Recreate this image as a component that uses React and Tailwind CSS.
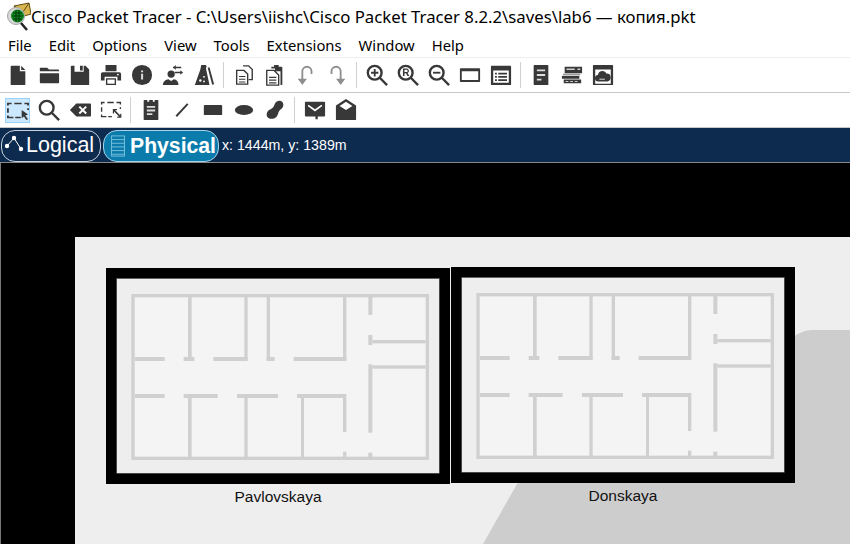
const Svg = ({ children, className = 'text-[#383838]' }) => (
  <svg viewBox="0 0 24 24" width="22" height="22" fill="currentColor" className={className}>
    {children}
  </svg>
);

const NewIcon = () => (
  <Svg>
    <path d="M5 2h9v6h6v14a1 1 0 0 1-1 1H5a1 1 0 0 1-1-1V3a1 1 0 0 1 1-1zM15.500 2l4.500 4.500h-4.500z" />
  </Svg>
);
const OpenIcon = () => (
  <Svg>
    <path d="M2 4h8l2 2h10a1 1 0 0 1 1 1v1H2zM2 10h21v10a1 1 0 0 1-1 1H3a1 1 0 0 1-1-1z" />
  </Svg>
);
const SaveIcon = () => (
  <Svg>
    <path d="M3 2h3v6.500h10V2h2l4 4v16a1 1 0 0 1-1 1H3a1 1 0 0 1-1-1V3a1 1 0 0 1 1-1zM12 2h3v5h-3z" />
  </Svg>
);
const PrintIcon = () => (
  <Svg>
    <path d="M6 1h12v7H6zM3 9h18a2 2 0 0 1 2 2v7h-4v-4H5v4H1v-7a2 2 0 0 1 2-2zM6.500 15.500h11V23h-11z" />
    <circle cx="19.500" cy="11.500" r="1" fill="#fff" />
    <path d="M8 17h8v4.500H8z" fill="#fff" />
  </Svg>
);
const InfoIcon = () => (
  <Svg>
    <circle cx="12" cy="12" r="11" />
    <path d="M11 10.500h2.200V17H11zM11 7h2.200v2H11z" fill="#ddd" />
  </Svg>
);
const UserIcon = () => (
  <Svg>
    <circle cx="10" cy="11" r="4" />
    <path d="M1 23c0-4 3-6 6-6.500l3 2 3-2c3 .5 5 2.500 5 6.500z" />
    <path d="M12 3h9v1.500h-9zM12 3.700l3-2.500v5zM14 10h8V8.500h-8zM23 9.200l-3-2.500v5z" />
  </Svg>
);
const LabIcon = () => (
  <Svg>
    <path d="M9 1h5l1 2-1 1 4 19H2l6-17z" />
    <path d="M16 4l2-.5L23 22l-2 .5z" />
    <circle cx="8" cy="18" r="1.300" fill="#fff" />
    <circle cx="12" cy="14" r="1" fill="#fff" />
    <circle cx="12" cy="19" r="1" fill="#fff" />
  </Svg>
);
const CopyIcon = () => (
  <Svg>
    <path d="M11 2h6l4 4v11h-4" fill="#fff" stroke="currentColor" strokeWidth="1.500" />
    <path d="M4 7h8l4 4v11H4z" fill="#fff" stroke="currentColor" strokeWidth="1.500" />
    <path d="M6.500 13h7v1.300h-7zM6.500 16h7v1.300h-7zM6.500 19h7v1.300h-7z" />
  </Svg>
);
const PasteIcon = () => (
  <Svg>
    <path d="M8 3h3V1h5v2h3a1 1 0 0 1 1 1v18a1 1 0 0 1-1 1h-1V8h-6V5H8z" />
    <path d="M3 7h8l5 5v11H3z" fill="#fff" stroke="currentColor" strokeWidth="1.500" />
    <path d="M5.500 14h8v1.300h-8zM5.500 17h8v1.300h-8zM5.500 20h8v1.300h-8z" />
  </Svg>
);
const UndoIcon = () => (
  <Svg className="text-[#8e8e8e]">
    <path d="M8 23l-5-7h4V8a6 6 0 0 1 12 0v3h-2V8a4 4 0 0 0-8 0v8h4z" />
  </Svg>
);
const RedoIcon = () => (
  <Svg className="text-[#8e8e8e]">
    <path d="M16 23l5-7h-4V8a6 6 0 0 0-12 0v3h2V8a4 4 0 0 1 8 0v8h-4z" />
  </Svg>
);
const Lens = ({ children }) => (
  <Svg>
    <circle cx="9.500" cy="9.500" r="7.500" fill="none" stroke="currentColor" strokeWidth="2.600" />
    <path d="M15 15l8 8" stroke="currentColor" strokeWidth="2.600" />
    {children}
  </Svg>
);
const WindowIcon = () => (
  <Svg>
    <path d="M2 4.500h20a1 1 0 0 1 1 1v13a1 1 0 0 1-1 1H2a1 1 0 0 1-1-1v-13a1 1 0 0 1 1-1zM3 8v9.500h18V8z" fillRule="evenodd" />
  </Svg>
);
const ListIcon = () => (
  <Svg>
    <path d="M2 2h20a1 1 0 0 1 1 1v19a1 1 0 0 1-1 1H2a1 1 0 0 1-1-1V3a1 1 0 0 1 1-1zM3.500 7v13.500h17V7z" fillRule="evenodd" />
    <path d="M5.500 9.500h2v2h-2zM9 9.500h9.500v2H9zM5.500 13h2v2h-2zM9 13h9.500v2H9zM5.500 16.500h2v2h-2zM9 16.500h9.500v2H9z" />
  </Svg>
);
const DocIcon = () => (
  <Svg>
    <path d="M5 1h14a1 1 0 0 1 1 1v20a1 1 0 0 1-1 1H5a1 1 0 0 1-1-1V2a1 1 0 0 1 1-1z" />
    <path d="M7.500 6h9v2h-9zM7.500 11h9v2h-9zM7.500 16h5v2h-5z" fill="#ddd" />
  </Svg>
);
const SwitchIcon = () => (
  <Svg>
    <path d="M4 3h19v7H4zM1 13h19v3H1zM3 17h19v4H3z" />
    <path d="M6 5h9v1.500H6zM18 5h3v1.500h-3zM5 18.500h3v1H5zM10 18.500h3v1h-3zM15 18.500h3v1h-3z" fill="#ccc" />
    <path d="M2 10.500h19v2H2z" fill="#9a9a9a" />
  </Svg>
);
const CloudIcon = () => (
  <Svg>
    <path d="M2 1h20a1 1 0 0 1 1 1v20a1 1 0 0 1-1 1H2a1 1 0 0 1-1-1V2a1 1 0 0 1 1-1zM3.500 6v15.500h17V6z" fillRule="evenodd" />
    <path d="M7 19a3.500 3.500 0 0 1-.5-7A5 5 0 0 1 16 10.500a4.300 4.300 0 0 1 1 8.500z" />
    <path d="M8 16h6v1.200H8z" fill="#ccc" />
  </Svg>
);
const SelectIcon = () => (
  <Svg>
    <path d="M0 4h5v1.600H2v1.500H0zM8 4h8v1.600H8zM19 4h5v3h-2V5.600h-3zM0 10h2v5H0zM22 10h2v2h-2zM0 18h2v1.400h5V21H0zM9 19.400h6V21H9z" />
    <path d="M16 12l7 5-3 1 3 4-2 1-2.500-4-2.500 2z" />
  </Svg>
);
const DeleteIcon = () => (
  <Svg>
    <path d="M8 5h15a1 1 0 0 1 1 1v12a1 1 0 0 1-1 1H8l-7-7z" />
    <path d="M10.500 9l1.500-1.500 3 3 3-3 1.500 1.500-3 3 3 3-1.500 1.500-3-3-3 3-1.500-1.500 3-3z" fill="#fff" />
  </Svg>
);
const ResizeIcon = () => (
  <Svg>
    <path d="M1 3h4v1.500H2.500V6H1zM8 3h7v1.500H8zM18 3h5v3h-1.500V4.500H18zM1 9h1.500v5H1zM21.500 9H23v2h-1.500zM1 17h1.500v1.500H7V20H1zM9 18.500h4V20H9z" />
    <path d="M14 11h4.500v1.300h-2l5.500 5.500V16h1.300v4.500h-4.500v-1.300h2l-5.500-5.500v2H14z" />
  </Svg>
);
const NoteIcon = () => (
  <Svg>
    <path d="M5 1h3v2h2V1h4v2h2V1h3a1 1 0 0 1 1 1v20a1 1 0 0 1-1 1H5a1 1 0 0 1-1-1V2a1 1 0 0 1 1-1z" />
    <path d="M7.500 7.500h9v2h-9zM7.500 11.500h9v2h-9zM7.500 15.500h6v2h-6z" fill="#ddd" />
  </Svg>
);
const LineIcon = () => (
  <Svg>
    <path d="M6.500 19.500L5 18 17.500 4.500 19 6z" />
  </Svg>
);
const RectIcon = () => (
  <Svg>
    <rect x="2" y="6.500" width="20" height="11" rx="1" />
  </Svg>
);
const EllipseIcon = () => (
  <Svg>
    <ellipse cx="12" cy="12" rx="10" ry="5.500" />
  </Svg>
);
const FreeformIcon = () => (
  <Svg>
    <path d="M16.500 2c3.500 0 5 2.500 4.500 5.500-.5 2.500-3 3.500-4.500 5.500-1.500 2.500-1 4.500-3 6.500-2.300 2.500-7.500 3-9.500 .5-2-2.500-1-6 1.500-8 2.300-1.300 4-2 5.300-4.200C11.800 4.500 13.500 2 16.500 2z" />
  </Svg>
);
const MailIcon = () => (
  <Svg>
    <path d="M2 3h20a1 1 0 0 1 1 1v14a1 1 0 0 1-1 1h-7v3h-2.500v-3H2a1 1 0 0 1-1-1V4a1 1 0 0 1 1-1z" />
    <path d="M4 7.500l1-1.300 7 5 7-5 1 1.300-8 6z" fill="#fff" />
  </Svg>
);
const OpenMailIcon = () => (
  <Svg>
    <path d="M12 0l11 7v15a1 1 0 0 1-1 1H2a1 1 0 0 1-1-1V7z" />
    <path d="M5 7.500L12 3l7 4.500L12 12z" fill="#fff" />
  </Svg>
);

const AppIcon = () => (
  <svg viewBox="0 0 26 30" width="26" height="30" className="shrink-0">
    <path d="M9 4l15-3 2 11-10 3z" fill="#d9b64e" stroke="#5e4a12" strokeWidth="1" />
    <path d="M9 4l9 6 6-9" fill="none" stroke="#5e4a12" strokeWidth="1" />
    <circle cx="11" cy="14" r="8.500" fill="#d8d8d8" stroke="#a5a5a5" strokeWidth="1" />
    <circle cx="12.500" cy="14" r="6.500" fill="#0f8a22" />
    <path d="M8 11h9M7 14h11M8 17h9M11 8v12M14 8v12" stroke="#04300a" strokeWidth="0.900" />
    <path d="M16 21l6 7" stroke="#222" strokeWidth="2.500" />
  </svg>
);

const Sep = () => <div className="mx-[4px] h-[26px] w-px bg-[#d0d0d0]" />;

const Tool = ({ children, active }) => (
  <div className="flex h-[31px] w-[31px] items-center justify-center">
    <div
      className={`flex h-[25px] w-[25px] items-center justify-center ${
        active ? 'border border-[#99d1ff] bg-[#cce8ff]' : ''
      }`}
    >
      {children}
    </div>
  </div>
);

const menus = ['File', 'Edit', 'Options', 'View', 'Tools', 'Extensions', 'Window', 'Help'];

const walls = [
  [264, 110, 11, 190],
  [433, 110, 10, 190],
  [500, 110, 10, 190],
  [729, 110, 10, 190],
  [805, 110, 12, 55],
  [805, 225, 12, 30],
  [817, 240, 160, 10],
  [105, 291, 89, 12],
  [251, 291, 32, 12],
  [340, 291, 103, 12],
  [500, 291, 24, 12],
  [581, 291, 158, 12],
  [805, 313, 12, 205],
  [817, 316, 160, 10],
  [105, 402, 89, 12],
  [251, 402, 102, 12],
  [411, 402, 123, 12],
  [591, 402, 148, 12],
  [264, 414, 11, 178],
  [433, 414, 10, 178],
  [603, 414, 9, 178],
  [729, 414, 10, 102],
  [729, 575, 10, 17],
  [805, 578, 12, 14],
];

// one building: black frame, paper and wall drawing, with the caption underneath
const FloorPlan = ({ name, className }) => (
  <div className={`absolute w-[344px] ${className}`}>
    <svg viewBox="18 24 1032 648" width="344" height="216" className="block">
      <rect x="18" y="24" width="1032" height="648" fill="#000" />
      <rect x="50" y="55" width="968" height="585" fill="#eeeeee" stroke="#444" strokeWidth="2" />
      <rect x="99" y="107" width="883" height="488" fill="#f4f4f4" stroke="#d0d0d0" strokeWidth="10" />
      {walls.map(([x, y, w, h]) => (
        <rect key={`${x}-${y}`} x={x} y={y} width={w} height={h} fill="#d0d0d0" />
      ))}
    </svg>
    <div className="mt-[4px] text-center font-['Liberation_Sans',sans-serif] text-[15.500px] leading-[18px] text-[#111]">
      {name}
    </div>
  </div>
);

export default function App() {
  return (
    <div className="flex h-[544px] w-[850px] flex-col overflow-hidden bg-white font-['Noto_Sans',sans-serif] text-black">
      <div className="flex h-[34px] items-center pl-[5px]">
        <AppIcon />
        <span className="whitespace-nowrap text-[16.750px]">
          Cisco Packet Tracer - C:\Users\iishc\Cisco Packet Tracer 8.2.2\saves\lab6 — копия.pkt
        </span>
      </div>

      <div className="flex h-[24px] items-center gap-[17px] border-b border-[#eeeeee] pl-[8px] text-[14.800px]">
        {menus.map((m) => (
          <span key={m}>{m}</span>
        ))}
      </div>

      <div className="flex h-[35px] items-center border-b border-[#c8c8c8] pl-[2px]">
        <Tool><NewIcon /></Tool>
        <Tool><OpenIcon /></Tool>
        <Tool><SaveIcon /></Tool>
        <Tool><PrintIcon /></Tool>
        <Tool><InfoIcon /></Tool>
        <Tool><UserIcon /></Tool>
        <Tool><LabIcon /></Tool>
        <Sep />
        <Tool><CopyIcon /></Tool>
        <Tool><PasteIcon /></Tool>
        <Tool><UndoIcon /></Tool>
        <Tool><RedoIcon /></Tool>
        <Sep />
        <Tool>
          <Lens>
            <path d="M5.500 8.500h8v2h-8zM8.500 5.500h2v8h-2z" />
          </Lens>
        </Tool>
        <Tool>
          <Lens>
            <path d="M6.500 5h4a2.500 2.500 0 0 1 1 4.800l2 3.200h-2l-1.800-3H8.200v3H6.500zm1.700 1.400v2.300h2.300a1.150 1.150 0 0 0 0-2.300z" />
          </Lens>
        </Tool>
        <Tool>
          <Lens>
            <path d="M5.500 8.500h8v2h-8z" />
          </Lens>
        </Tool>
        <Tool><WindowIcon /></Tool>
        <Tool><ListIcon /></Tool>
        <Sep />
        <Tool><DocIcon /></Tool>
        <Tool><SwitchIcon /></Tool>
        <Tool><CloudIcon /></Tool>
      </div>

      <div className="flex h-[35px] items-center border-b border-[#c8c8c8] pl-[2px]">
        <Tool active><SelectIcon /></Tool>
        <Tool><Lens /></Tool>
        <Tool><DeleteIcon /></Tool>
        <Tool><ResizeIcon /></Tool>
        <Sep />
        <Tool><NoteIcon /></Tool>
        <Tool><LineIcon /></Tool>
        <Tool><RectIcon /></Tool>
        <Tool><EllipseIcon /></Tool>
        <Tool><FreeformIcon /></Tool>
        <Sep />
        <Tool><MailIcon /></Tool>
        <Tool><OpenMailIcon /></Tool>
      </div>

      <div className="flex h-[35px] items-center gap-[2px] border-b border-[#8a8a8a] bg-[#0d2a4f] pl-[1px] pt-[1px] font-['Liberation_Sans',sans-serif] text-white">
        <div className="flex h-[32px] w-[100px] items-center gap-[1px] rounded-[14px] border border-[#c9d3dd] pl-[1px]">
          <svg viewBox="0 0 22 22" width="22" height="22" fill="#fff">
            <path d="M4 11l7-8 7 11" fill="none" stroke="#fff" strokeWidth="1" />
            <circle cx="11" cy="3" r="2.200" />
            <circle cx="4" cy="11" r="2.200" />
            <circle cx="18" cy="14" r="2.200" />
          </svg>
          <span className="text-[21.500px] leading-none">Logical</span>
        </div>
        <div className="flex h-[32px] w-[116px] items-center gap-[4px] rounded-[14px] border border-[#a6d3e6] bg-[#0b7bab] pl-[6px]">
          <svg viewBox="0 0 16 24" width="16" height="22" fill="none" stroke="#7cc4e0" strokeWidth="1">
            <rect x="1" y="1" width="14" height="22" />
            <path d="M1 5h14M1 9h14M1 13h14M1 17h14M1 21h14" />
          </svg>
          <span className="text-[21.200px] font-bold leading-none">Physical</span>
        </div>
        <span className="ml-[1px] text-[14.200px]">x: 1444m, y: 1389m</span>
      </div>

      <div className="relative flex-1 border-l border-[#777] bg-black">
        <div className="absolute left-[74px] top-[74px] h-[320px] w-[776px] overflow-hidden bg-[#eeeeee]">
          <svg viewBox="0 0 776 320" width="776" height="320" className="absolute left-0 top-0">
            <path d="M408 307L442 247 718 100Q726 94 736 93H775V307z" fill="#cdcdcd" />
          </svg>
        </div>
        <FloorPlan name="Pavlovskaya" className="left-[105px] top-[105px]" />
        <FloorPlan name="Donskaya" className="left-[450px] top-[104px]" />
      </div>
    </div>
  );
}
